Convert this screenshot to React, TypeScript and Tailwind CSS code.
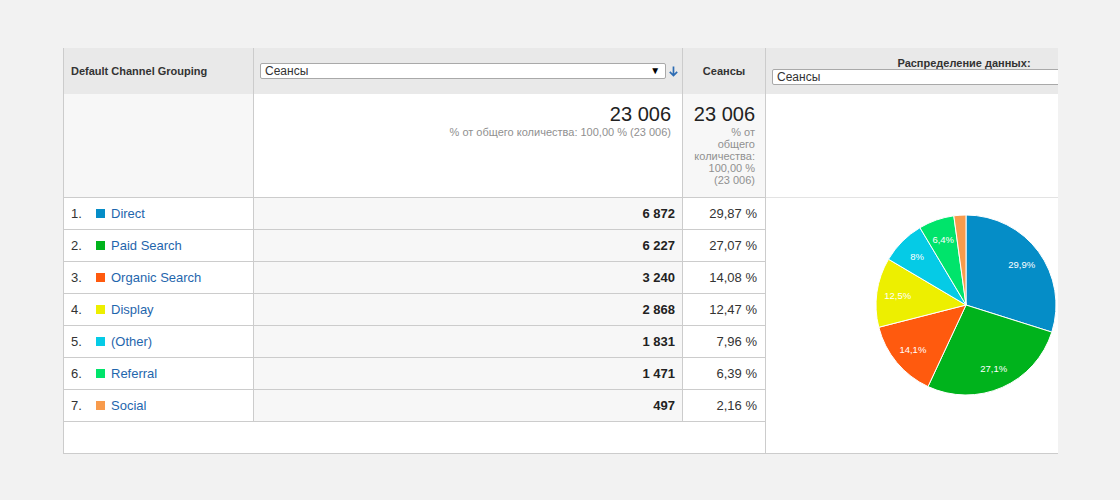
import React from "react";

type Row = {
  name: string;
  color: string;
  value: string;
  pct: string;
  share: number;
  label: string;
};

const rows: Row[] = [
  { name: "Direct", color: "#058dc7", value: "6 872", pct: "29,87 %", share: 29.87, label: "29,9%" },
  { name: "Paid Search", color: "#00b31c", value: "6 227", pct: "27,07 %", share: 27.07, label: "27,1%" },
  { name: "Organic Search", color: "#ff5a0e", value: "3 240", pct: "14,08 %", share: 14.08, label: "14,1%" },
  { name: "Display", color: "#edef00", value: "2 868", pct: "12,47 %", share: 12.47, label: "12,5%" },
  { name: "(Other)", color: "#05cbe6", value: "1 831", pct: "7,96 %", share: 7.96, label: "8%" },
  { name: "Referral", color: "#00e46b", value: "1 471", pct: "6,39 %", share: 6.39, label: "6,4%" },
  { name: "Social", color: "#f89b4c", value: "497", pct: "2,16 %", share: 2.16, label: "" },
];

function Pie() {
  const cx = 100;
  const cy = 100;
  const r = 90;
  const total = rows.reduce((s, x) => s + x.share, 0);
  let acc = 0;
  const pt = (a: number, rad: number) => [cx + rad * Math.sin(a), cy - rad * Math.cos(a)];

  return (
    <svg width="200" height="200" viewBox="0 0 200 200">
      {rows.map((row) => {
        const a0 = (acc / total) * Math.PI * 2;
        acc += row.share;
        const a1 = (acc / total) * Math.PI * 2;
        const [x0, y0] = pt(a0, r);
        const [x1, y1] = pt(a1, r);
        const large = a1 - a0 > Math.PI ? 1 : 0;
        return (
          <path
            key={row.name}
            d={`M${cx} ${cy} L${x0} ${y0} A${r} ${r} 0 ${large} 1 ${x1} ${y1} Z`}
            fill={row.color}
            stroke="#fff"
            strokeWidth="1"
          />
        );
      })}
      {(() => {
        let a = 0;
        return rows.map((row) => {
          const mid = ((a + row.share / 2) / total) * Math.PI * 2;
          a += row.share;
          if (!row.label) return null;
          const [x, y] = pt(mid, 69);
          return (
            <text
              key={row.name + "l"}
              x={x}
              y={y + 3.5}
              textAnchor="middle"
              fill="#fff"
              fontSize="9.5"
              fontFamily="'Liberation Sans', Arial, sans-serif"
            >
              {row.label}
            </text>
          );
        });
      })()}
    </svg>
  );
}

function DownArrow() {
  return (
    <svg width="11" height="11" viewBox="0 0 11 11">
      <path d="M5.5 0.5 V9.5 M1.8 5.8 L5.5 9.5 L9.2 5.8" fill="none" stroke="#2d6cb3" strokeWidth="1.7" />
    </svg>
  );
}

export default function App() {
  return (
    <div className="w-[1120px] h-[500px] bg-[#f2f2f2] pt-[48px] pl-[63px] font-['Liberation_Sans',Arial,sans-serif] text-[#333]">
      <div className="w-[995px] flex border-l border-b border-[#cccccc] bg-white">
        {/* table part */}
        <div className="w-[702px] flex flex-col">
          {/* header */}
          <div className="flex h-[46px] bg-[#e9e9e9]">
            <div className="w-[190px] border-r border-[#cccccc] flex items-center pl-[7px] text-[11px] font-bold">
              Default Channel Grouping
            </div>
            <div className="w-[429px] border-r border-[#cccccc] flex items-center pl-[6px] pr-[3px] gap-[2px]">
              <div className="w-[407px] h-[16px] bg-white border border-[#a9a9a9] rounded-[2px] flex items-center justify-between pl-[4px] pr-[5px] text-[12px] leading-none">
                <span>Сеансы</span>
                <span className="text-[10px] text-black">▼</span>
              </div>
              <DownArrow />
            </div>
            <div className="w-[83px] border-r border-[#cccccc] flex items-center justify-center text-[11px] font-bold">
              Сеансы
            </div>
          </div>

          {/* totals */}
          <div className="flex h-[104px] border-b border-[#cccccc]">
            <div className="w-[190px] border-r border-[#cccccc] bg-[#f7f7f7]" />
            <div className="w-[429px] border-r border-[#cccccc] bg-white flex flex-col items-end pt-[10px] pr-[11px]">
              <div className="text-[20px] leading-[20px] text-[#222]">23 006</div>
              <div className="mt-[2px] text-[11px] leading-[12px] text-[#909090]">
                % от общего количества: 100,00 % (23 006)
              </div>
            </div>
            <div className="w-[83px] border-r border-[#cccccc] bg-[#f7f7f7] flex flex-col items-end pt-[10px] pr-[10px]">
              <div className="text-[20px] leading-[20px] text-[#222]">23 006</div>
              <div className="mt-[2px] text-[11px] leading-[12px] text-[#909090] text-right">
                % от
                <br />
                общего
                <br />
                количества:
                <br />
                100,00 %
                <br />
                (23 006)
              </div>
            </div>
          </div>

          {/* rows */}
          {rows.map((row, i) => (
            <div key={row.name} className="flex h-[32px] border-b border-[#cccccc]">
              <div className="w-[190px] border-r border-[#cccccc] bg-white flex items-center pl-[7px] text-[13px]">
                <span className="w-[25px]">{i + 1}.</span>
                <span className="w-[9px] h-[9px] mr-[6px]" style={{ backgroundColor: row.color }} />
                <span className="text-[#1f66ad]">{row.name}</span>
              </div>
              <div className="w-[429px] border-r border-[#cccccc] bg-[#f7f7f7] flex items-center justify-end pr-[7px] text-[13px] font-bold text-[#222]">
                {row.value}
              </div>
              <div className="w-[83px] border-r border-[#cccccc] bg-white flex items-center justify-end pr-[8px] text-[13px]">
                {row.pct}
              </div>
            </div>
          ))}

          {/* empty row */}
          <div className="h-[31px] border-r border-[#cccccc] bg-white" />
        </div>

        {/* distribution column */}
        <div className="w-[292px] overflow-hidden flex flex-col">
          <div className="w-[394px] h-[46px] bg-[#e9e9e9] pt-[9px] pl-[6px]">
            <div className="text-center text-[11px] leading-[12px] font-bold pr-[4px]">Распределение данных:</div>
            <div className="w-[400px] h-[16px] bg-white border border-[#a9a9a9] rounded-[2px] flex items-center pl-[4px] text-[12px] leading-none">
              Сеансы
            </div>
          </div>
          <div className="h-[104px] border-b border-[#e3e3e3] bg-white" />
          <div className="flex-1 bg-white">
            <div className="ml-[100px] mt-[7px] w-[200px] h-[200px]">
              <Pie />
            </div>
          </div>
        </div>
      </div>
    </div>
  );
}
